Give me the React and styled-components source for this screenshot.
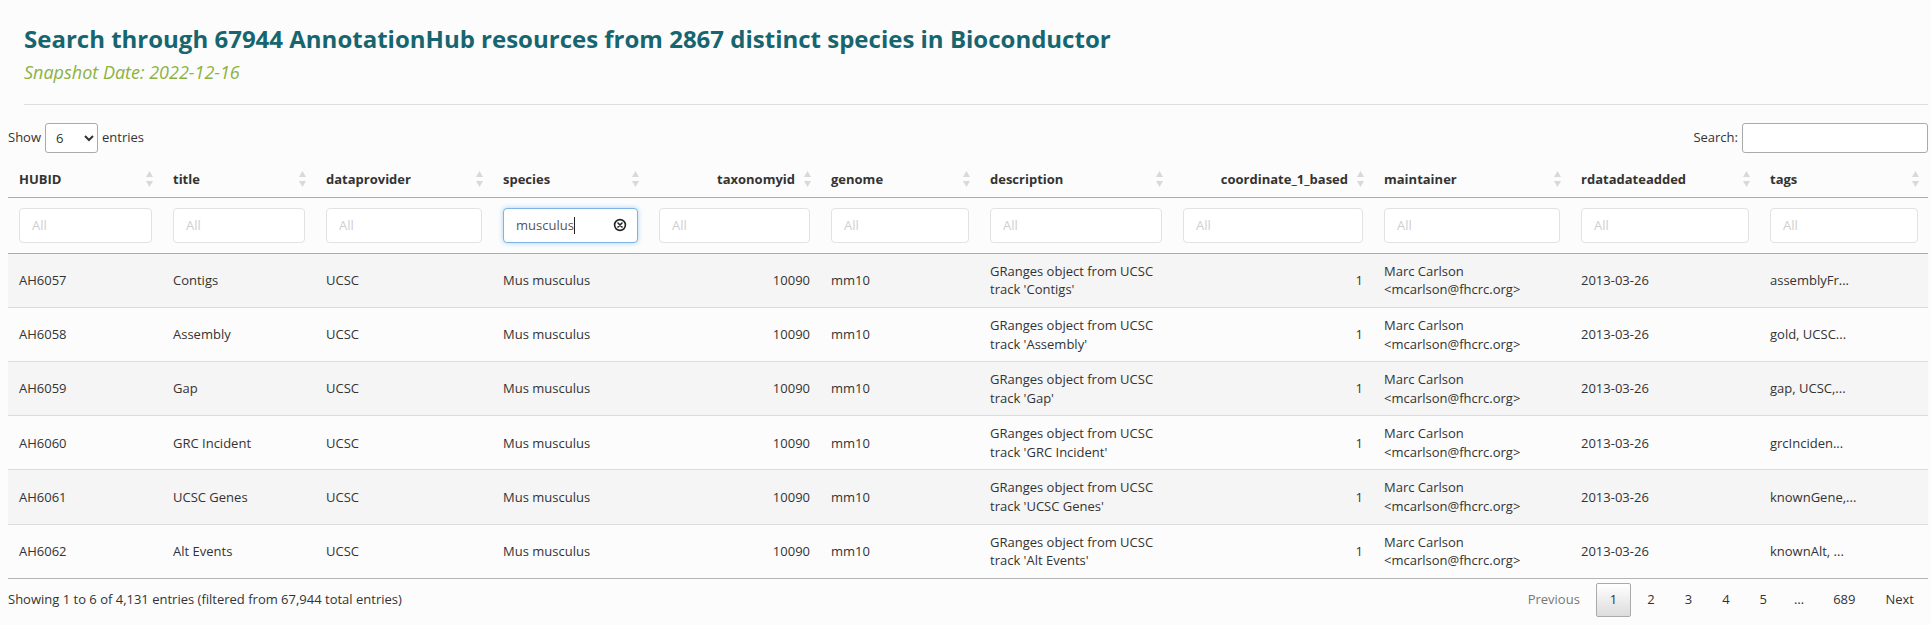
import React from 'react';
import styled, { createGlobalStyle } from 'styled-components';

const GlobalStyle = createGlobalStyle`
  body {
    margin: 0;
    background: #fcfcfc;
    font-family: "Open Sans", "Liberation Sans", sans-serif;
    font-size: 13px;
    color: #333;
  }
`;

const Page = styled.div`
  padding: 24.5px 3px 0 8px;
`;

const Header = styled.header`
  padding-left: 16px;
`;

const Title = styled.h2`
  margin: 0;
  font-size: 24px;
  line-height: 28.8px;
  font-weight: 700;
  color: #16656f;
`;

const Subtitle = styled.div`
  margin-top: 8.5px;
  font-size: 18px;
  line-height: 21.6px;
  font-style: italic;
  color: #8cb23f;
`;

const Divider = styled.hr`
  margin: 20.5px 0 0 0;
  border: 0;
  border-top: 1px solid #dedede;
`;

const Controls = styled.div`
  display: flex;
  justify-content: space-between;
  align-items: center;
  margin-top: 18px;
  height: 30px;
  line-height: 19px;
`;

const Label = styled.label`
  display: flex;
  align-items: center;
  gap: 4px;
`;

const LengthSelect = styled.select`
  width: 53px;
  height: 30px;
  padding: 4px 4px 4px 6px;
  border: 1px solid #aaa;
  border-radius: 3px;
  background: #fff;
  font-family: inherit;
  font-size: 13px;
  color: #333;
`;

const SearchInput = styled.input`
  width: 186px;
  height: 30px;
  box-sizing: border-box;
  border: 1px solid #aaa;
  border-radius: 3px;
  background: #fff;
  padding: 4px;
  font-family: inherit;
`;

const Table = styled.table`
  margin-top: 9px;
  width: 1920px;
  table-layout: fixed;
  border-collapse: collapse;
`;

const Col = styled.col`
  width: ${(p) => p.$w}px;
`;

const Th = styled.th`
  padding: 8px 9px 8px 11px;
  font-weight: 700;
  line-height: 19px;
  border-bottom: 1px solid #ababab;
`;

const HeadInner = styled.div`
  display: flex;
  align-items: center;
  gap: 9px;
`;

const HeadLabel = styled.span`
  flex: 1;
  text-align: ${(p) => (p.$right ? 'right' : 'left')};
  white-space: nowrap;
`;

const FilterCell = styled.td`
  padding: 10px 10px 10px 11px;
  border-bottom: 1px solid #ababab;
`;

const FilterBox = styled.div`
  display: flex;
  align-items: center;
  height: 35px;
  box-sizing: border-box;
  padding: 0 10px 0 12px;
  background: #fff;
  border: 1px solid ${(p) => (p.$focused ? '#7db3e6' : '#e2e2e2')};
  border-radius: 4px;
  box-shadow: ${(p) => (p.$focused ? '0 0 5px rgba(102, 175, 233, 0.55)' : 'none')};
`;

const FilterText = styled.span`
  flex: 1;
  color: ${(p) => (p.$placeholder ? '#cfcfcf' : '#555')};
  white-space: nowrap;
`;

const Caret = styled.span`
  display: inline-block;
  width: 1px;
  height: 17px;
  background: #222;
  vertical-align: -4px;
`;

const Row = styled.tr`
  background: ${(p) => (p.$odd ? '#f5f5f5' : '#fcfcfc')};
  border-top: 1px solid #dcdcdc;
  &:last-child {
    border-bottom: 1px solid #b5b5b5;
  }
`;

const Td = styled.td`
  padding: 8px 10px 8px 11px;
  line-height: 18.57px;
  vertical-align: middle;
  text-align: ${(p) => (p.$right ? 'right' : 'left')};
`;

const Footer = styled.div`
  display: flex;
  justify-content: space-between;
  align-items: flex-start;
  line-height: 19px;
`;

const Info = styled.div`
  padding-top: 11px;
`;

const Pagination = styled.div`
  display: flex;
  align-items: center;
  padding-top: 4px;
`;

const PageButton = styled.span`
  box-sizing: border-box;
  min-width: 34px;
  margin-left: 2px;
  padding: 6.5px 13px;
  text-align: center;
  border: 1px solid ${(p) => (p.$current ? '#aaa' : 'transparent')};
  border-radius: 2px;
  color: ${(p) => (p.$disabled ? '#777' : '#333')};
  background: ${(p) => (p.$current ? 'linear-gradient(to bottom, #fff 0%, #dcdcdc 100%)' : 'transparent')};
`;

const Ellipsis = styled.span`
  padding: 0 13px;
  color: #333;
`;

const SortIcon = () => (
  <svg width="7" height="16" viewBox="0 0 7 16">
    <path d="M3.5 0 L7 6 L0 6 Z" fill="#d9d9d9" />
    <path d="M0 10 L7 10 L3.5 16 Z" fill="#d9d9d9" />
  </svg>
);

const ClearIcon = () => (
  <svg width="14" height="14" viewBox="0 0 14 14">
    <circle cx="7" cy="7" r="5.4" fill="none" stroke="#222" strokeWidth="1.6" />
    <path d="M5 5 L9 9 M9 5 L5 9" stroke="#222" strokeWidth="1.6" strokeLinecap="round" />
  </svg>
);

const columns = [
  { key: 'id', label: 'HUBID', w: 154 },
  { key: 'title', label: 'title', w: 153 },
  { key: 'provider', label: 'dataprovider', w: 177 },
  { key: 'species', label: 'species', w: 156 },
  { key: 'taxon', label: 'taxonomyid', w: 172, right: true },
  { key: 'genome', label: 'genome', w: 159 },
  { key: 'desc', label: 'description', w: 193 },
  { key: 'coord', label: 'coordinate_1_based', w: 201, right: true },
  { key: 'maint', label: 'maintainer', w: 197 },
  { key: 'added', label: 'rdatadateadded', w: 189 },
  { key: 'tags', label: 'tags', w: 169 },
];

const entries = [
  ['AH6057', 'Contigs', 'assemblyFr...'],
  ['AH6058', 'Assembly', 'gold, UCSC...'],
  ['AH6059', 'Gap', 'gap, UCSC,...'],
  ['AH6060', 'GRC Incident', 'grcInciden...'],
  ['AH6061', 'UCSC Genes', 'knownGene,...'],
  ['AH6062', 'Alt Events', 'knownAlt, ...'],
];

const rows = entries.map(([id, title, tags]) => ({
  id,
  title,
  provider: 'UCSC',
  species: 'Mus musculus',
  taxon: '10090',
  genome: 'mm10',
  desc: `GRanges object from UCSC track '${title}'`,
  coord: '1',
  maint: 'Marc Carlson <mcarlson@fhcrc.org>',
  added: '2013-03-26',
  tags,
}));

const App = () => (
  <Page>
    <GlobalStyle />
    <Header>
      <Title>Search through 67944 AnnotationHub resources from 2867 distinct species in Bioconductor</Title>
      <Subtitle>Snapshot Date: 2022-12-16</Subtitle>
      <Divider />
    </Header>

    <Controls>
      <Label>
        Show
        <LengthSelect defaultValue="6">
          <option value="6">6</option>
          <option value="10">10</option>
          <option value="25">25</option>
        </LengthSelect>
        entries
      </Label>
      <Label>
        Search:
        <SearchInput type="search" />
      </Label>
    </Controls>

    <Table>
      <colgroup>
        {columns.map((c) => (
          <Col key={c.key} $w={c.w} />
        ))}
      </colgroup>
      <thead>
        <tr>
          {columns.map((c) => (
            <Th key={c.key}>
              <HeadInner>
                <HeadLabel $right={c.right}>{c.label}</HeadLabel>
                <SortIcon />
              </HeadInner>
            </Th>
          ))}
        </tr>
        <tr>
          {columns.map((c) =>
            c.key === 'species' ? (
              <FilterCell key={c.key}>
                <FilterBox $focused>
                  <FilterText>
                    musculus
                    <Caret />
                  </FilterText>
                  <ClearIcon />
                </FilterBox>
              </FilterCell>
            ) : (
              <FilterCell key={c.key}>
                <FilterBox>
                  <FilterText $placeholder>All</FilterText>
                </FilterBox>
              </FilterCell>
            )
          )}
        </tr>
      </thead>
      <tbody>
        {rows.map((r, i) => (
          <Row key={r.id} $odd={i % 2 === 0}>
            {columns.map((c) => (
              <Td key={c.key} $right={c.right}>
                {r[c.key]}
              </Td>
            ))}
          </Row>
        ))}
      </tbody>
    </Table>

    <Footer>
      <Info>Showing 1 to 6 of 4,131 entries (filtered from 67,944 total entries)</Info>
      <Pagination>
        <PageButton $disabled>Previous</PageButton>
        <PageButton $current>1</PageButton>
        <PageButton>2</PageButton>
        <PageButton>3</PageButton>
        <PageButton>4</PageButton>
        <PageButton>5</PageButton>
        <Ellipsis>…</Ellipsis>
        <PageButton>689</PageButton>
        <PageButton>Next</PageButton>
      </Pagination>
    </Footer>
  </Page>
);

export default App;
